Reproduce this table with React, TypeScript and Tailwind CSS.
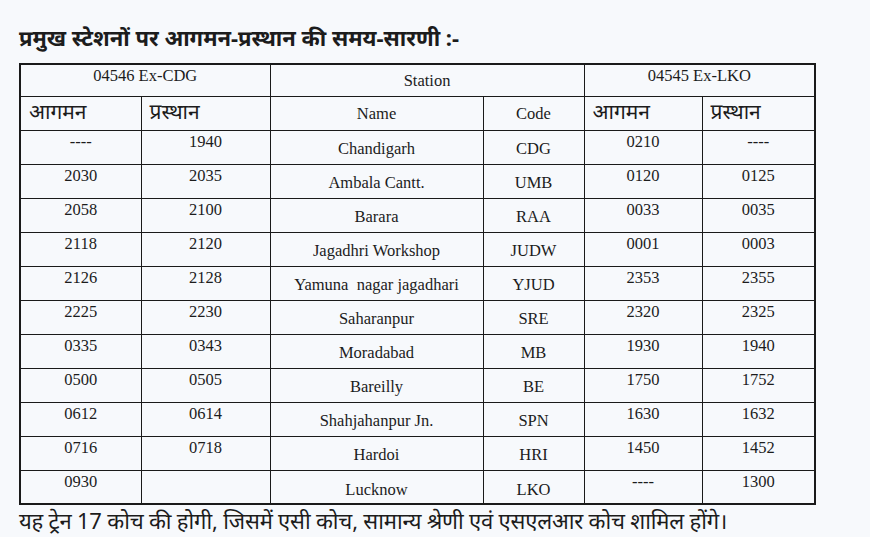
import React from "react";

type Row = {
  arr1: string;
  dep1: string;
  name: string;
  code: string;
  arr2: string;
  dep2: string;
};

const rows: Row[] = [
  { arr1: "----", dep1: "1940", name: "Chandigarh", code: "CDG", arr2: "0210", dep2: "----" },
  { arr1: "2030", dep1: "2035", name: "Ambala Cantt.", code: "UMB", arr2: "0120", dep2: "0125" },
  { arr1: "2058", dep1: "2100", name: "Barara", code: "RAA", arr2: "0033", dep2: "0035" },
  { arr1: "2118", dep1: "2120", name: "Jagadhri Workshop", code: "JUDW", arr2: "0001", dep2: "0003" },
  { arr1: "2126", dep1: "2128", name: "Yamuna\u00a0 nagar jagadhari", code: "YJUD", arr2: "2353", dep2: "2355" },
  { arr1: "2225", dep1: "2230", name: "Saharanpur", code: "SRE", arr2: "2320", dep2: "2325" },
  { arr1: "0335", dep1: "0343", name: "Moradabad", code: "MB", arr2: "1930", dep2: "1940" },
  { arr1: "0500", dep1: "0505", name: "Bareilly", code: "BE", arr2: "1750", dep2: "1752" },
  { arr1: "0612", dep1: "0614", name: "Shahjahanpur Jn.", code: "SPN", arr2: "1630", dep2: "1632" },
  { arr1: "0716", dep1: "0718", name: "Hardoi", code: "HRI", arr2: "1450", dep2: "1452" },
  { arr1: "0930", dep1: "", name: "Lucknow", code: "LKO", arr2: "----", dep2: "1300" },
];

const hindi = "font-['Noto_Sans','Lohit_Devanagari',sans-serif]";
const cell = "border border-[#1a1a1a] p-0";

const App = () => {
  return (
    <div className="w-[870px] h-[537px] overflow-hidden bg-[#f7f9fc] text-[#1c1c1c]">
      <div className="pl-[19px] pt-[22px]">
        <h1 className={`${hindi} text-[22px] font-bold leading-[30px] h-[41px]`}>
          प्रमुख स्टेशनों पर आगमन-प्रस्थान की समय-सारणी :-
        </h1>

        <table className="table-fixed border-collapse border-2 border-[#1a1a1a] w-[795px] font-['Liberation_Serif',serif] text-[16.5px] leading-[20px]">
          <colgroup>
            <col className="w-[121px]" />
            <col className="w-[129px]" />
            <col className="w-[213px]" />
            <col className="w-[101px]" />
            <col className="w-[118px]" />
            <col className="w-[113px]" />
          </colgroup>
          <thead>
            <tr className="h-[32px]">
              <th colSpan={2} className={`${cell} font-normal align-top pt-[1px]`}>
                04546 Ex-CDG
              </th>
              <th colSpan={2} className={`${cell} font-normal align-top pt-[6px]`}>
                Station
              </th>
              <th colSpan={2} className={`${cell} font-normal align-top pt-[1px]`}>
                04545 Ex-LKO
              </th>
            </tr>
            <tr className="h-[34px]">
              <th className={`${cell} ${hindi} font-normal text-left pl-[8px] text-[21px] leading-[28px] align-top`}>
                आगमन
              </th>
              <th className={`${cell} ${hindi} font-normal text-left pl-[8px] text-[21px] leading-[28px] align-top`}>
                प्रस्थान
              </th>
              <th className={`${cell} font-normal align-middle pt-[2px]`}>Name</th>
              <th className={`${cell} font-normal align-middle pt-[2px]`}>Code</th>
              <th className={`${cell} ${hindi} font-normal text-left pl-[8px] text-[21px] leading-[28px] align-top`}>
                आगमन
              </th>
              <th className={`${cell} ${hindi} font-normal text-left pl-[8px] text-[21px] leading-[28px] align-top`}>
                प्रस्थान
              </th>
            </tr>
          </thead>
          <tbody>
            {rows.map((r, i) => {
              const last = i === rows.length - 1;
              return (
                <tr key={r.code} className="h-[34px]">
                  <td className={`${cell} text-center align-top pt-[1px]`}>{r.arr1}</td>
                  <td className={`${cell} text-center align-top pt-[1px]`}>{r.dep1}</td>
                  <td className={`${cell} text-center align-middle ${last ? "pt-[7px]" : "pt-[4px]"}`}>{r.name}</td>
                  <td className={`${cell} text-center align-middle ${last ? "pt-[7px]" : "pt-[4px]"}`}>{r.code}</td>
                  <td className={`${cell} text-center align-top pt-[1px]`}>{r.arr2}</td>
                  <td className={`${cell} text-center align-top pt-[1px]`}>{r.dep2}</td>
                </tr>
              );
            })}
          </tbody>
        </table>

        <p className={`${hindi} text-[22px] leading-[30px] tracking-[-0.2px]`}>
          यह ट्रेन 17 कोच की होगी, जिसमें एसी कोच, सामान्य श्रेणी एवं एसएलआर कोच शामिल होंगे।
        </p>
      </div>
    </div>
  );
};

export default App;
